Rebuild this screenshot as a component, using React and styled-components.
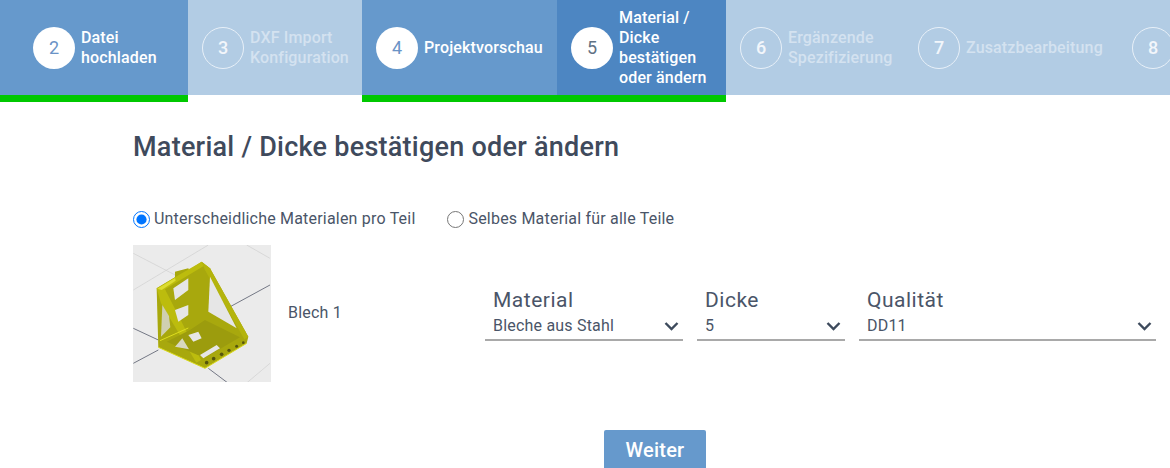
import React from 'react';
import styled, { createGlobalStyle } from 'styled-components';

const GlobalStyle = createGlobalStyle`
  html, body {
    margin: 0;
    height: 468px;
    overflow: hidden;
    background: #fff;
    font-family: Roboto, "Liberation Sans", sans-serif;
  }
`;

const Stepper = styled.nav`
  display: flex;
  align-items: flex-start;
  width: 1170px;
  height: 102px;
  overflow: hidden;
`;

const bgColors = { done: '#6699cc', current: '#4d86c2', todo: '#b2cce4' };

const Step = styled.div`
  flex: none;
  display: flex;
  align-items: center;
  gap: 6px;
  box-sizing: content-box;
  height: 95px;
  padding: 0 13px 0 14px;
  background: ${(p) => bgColors[p.$state]};
  border-bottom: ${(p) => (p.$state === 'todo' ? 'none' : '7px solid #00c800')};

  &:first-child {
    padding: 0 30px 0 33px;
  }
`;

const Circle = styled.span`
  flex: none;
  display: flex;
  align-items: center;
  justify-content: center;
  box-sizing: border-box;
  width: 42px;
  height: 42px;
  border-radius: 50%;
  font-size: 18px;
  background: ${(p) => (p.$state === 'todo' ? 'transparent' : '#fff')};
  border: ${(p) => (p.$state === 'todo' ? '1px solid #e8f0f8' : 'none')};
  color: ${(p) => (p.$state === 'todo' ? '#f2f6fb' : p.$state === 'current' ? '#5f7284' : '#6a93c6')};
  font-weight: ${(p) => (p.$state === 'todo' ? 500 : 400)};
`;

const StepLabel = styled.span`
  font-size: 16px;
  line-height: 20px;
  font-weight: 500;
  letter-spacing: 0.15px;
  white-space: nowrap;
  width: ${(p) => p.$width}px;
  color: ${(p) => (p.$state === 'todo' ? '#d4e2f0' : '#fff')};
`;

const Main = styled.main`
  padding: 28px 14px 0 133px;
`;

const Title = styled.h1`
  margin: 0;
  font-size: 27px;
  line-height: 34px;
  font-weight: 500;
  letter-spacing: 0.25px;
  color: #3f4a5c;
`;

const RadioRow = styled.div`
  display: flex;
  gap: 32px;
  margin-top: 44px;
`;

const RadioLabel = styled.label`
  display: flex;
  align-items: center;
  gap: 4px;
  font-size: 16px;
  line-height: 22px;
  letter-spacing: 0.2px;
  color: #4a5568;

  input {
    margin: 0;
    width: 17px;
    height: 17px;
  }
`;

const PartRow = styled.div`
  display: flex;
  align-items: center;
  margin-top: 15px;
`;

const Thumb = styled.svg`
  flex: none;
  display: block;
  width: 138px;
  height: 137px;
  background: #ebebeb;
`;

const PartName = styled.div`
  flex: none;
  width: 197px;
  padding: 0 0 2px 17px;
  box-sizing: border-box;
  font-size: 16px;
  letter-spacing: 0.2px;
  color: #4a5568;
`;

const Fields = styled.div`
  display: flex;
  gap: 14px;
  margin-left: 17px;
  margin-top: 2px;
`;

const Field = styled.div`
  width: ${(p) => p.$width}px;
`;

const FieldLabel = styled.div`
  padding-left: 8px;
  margin-bottom: 2px;
  font-size: 21px;
  line-height: 24px;
  letter-spacing: 0.5px;
  color: #4a5568;
`;

const SelectBox = styled.div`
  display: flex;
  align-items: center;
  justify-content: space-between;
  height: 27px;
  padding: 0 4px 2px 8px;
  box-sizing: border-box;
  border-bottom: 2px solid #a9a9a9;
  font-size: 16px;
  letter-spacing: 0.2px;
  color: #4a5568;
`;

const Actions = styled.div`
  display: flex;
  justify-content: center;
  padding-left: 21px;
  margin-top: 48px;
`;

const NextButton = styled.button`
  width: 102px;
  height: 40px;
  border: none;
  border-radius: 2px;
  background: #6699cc;
  color: #fff;
  font-family: inherit;
  font-size: 20px;
  font-weight: 500;
  letter-spacing: 0.2px;
`;

const Chevron = () => (
  <svg width="15" height="10" viewBox="0 0 15 10" fill="none">
    <path d="M1.5 2 L7.5 8 L13.5 2" stroke="#3d4a5c" strokeWidth="2.4" />
  </svg>
);

const steps = [
  { n: 2, label: ['Datei', 'hochladen'], state: 'done', width: 77 },
  { n: 3, label: ['DXF Import', 'Konfiguration'], state: 'todo', width: 99 },
  { n: 4, label: ['Projektvorschau'], state: 'done', width: 120 },
  { n: 5, label: ['Material /', 'Dicke', 'bestätigen', 'oder ändern'], state: 'current', width: 94 },
  { n: 6, label: ['Ergänzende', 'Spezifizierung'], state: 'todo', width: 103 },
  { n: 7, label: ['Zusatzbearbeitung'], state: 'todo', width: 139 },
  { n: 8, label: [], state: 'todo', width: 60 },
];

const fields = [
  { label: 'Material', value: 'Bleche aus Stahl', width: 198 },
  { label: 'Dicke', value: '5', width: 148 },
  { label: 'Qualität', value: 'DD11', width: 297 },
];

const PartThumb = () => (
  <Thumb viewBox="0 0 138 137">
    <defs>
      <filter id="soft">
        <feGaussianBlur stdDeviation="1.1" />
      </filter>
    </defs>
    <g transform="translate(-8 -5) scale(0.3333)" fill="none" filter="url(#soft)">
      <g stroke="#cfcfcf" strokeWidth="2">
        <path d="M25 40 L160 110" />
        <path d="M365 15 L435 55" />
        <path d="M25 150 L250 15" />
        <path d="M340 450 L435 370" />
      </g>
      <g stroke="#5b6070" strokeWidth="2.5">
        <path d="M25 265 L100 300" />
        <path d="M25 370 L100 330" />
        <path d="M270 225 L435 135" />
        <path d="M250 385 L310 430" />
      </g>
      {/* silhouette */}
      <path
        d="M95 145 L150 112 L150 95 L190 85 L192 90 L230 65 L255 85 L370 290 L365 310 L240 385 L100 322 Z"
        fill="#a8a808"
      />
      {/* lit left edge and top edge */}
      <path d="M95 145 L150 112 L230 65 L236 78 L120 148 L228 360 L214 368 L108 190 Z" fill="#bcbc10" />
      <path d="M97 146 L150 114 L152 122 L110 150 Z" fill="#dcdc30" />
      <path d="M230 65 L255 85 L370 290 L358 298 L240 90 Z" fill="#b4b40c" />
      {/* base, in shade */}
      <path d="M125 305 L195 270 L240 240 L345 292 L245 350 L218 345 Z" fill="#9c9c08" />
      {/* openings */}
      <g fill="#e6e6e6">
        <path d="M255 110 L335 265 L250 215 Z" />
        <path d="M145 145 L190 115 L190 150 L150 180 Z" />
        <path d="M150 210 L190 195 L190 225 L160 245 Z" />
        <path d="M190 285 L220 275 L230 295 L205 305 Z" />
        <path d="M225 345 L275 315 L285 325 L235 355 Z" />
      </g>
      <path d="M112 195 L132 228 L136 262 L108 290 Z" fill="#d0d0b0" />
      <path d="M172 295 L192 328 L150 320 Z" fill="#d8d8c0" />
      <path d="M105 302 L190 264" stroke="#dede20" strokeWidth="3" />
      <path d="M100 322 L240 385 L365 310" stroke="#d8d818" strokeWidth="3" />
      <g fill="#55550c">
        <circle cx="245" cy="368" r="5.5" />
        <circle cx="266" cy="356" r="5.5" />
        <circle cx="290" cy="343" r="5.5" />
        <circle cx="312" cy="331" r="5" />
        <circle cx="335" cy="319" r="4.5" />
        <circle cx="355" cy="308" r="4" />
      </g>
    </g>
  </Thumb>
);

export default function App() {
  return (
    <>
      <GlobalStyle />
      <Stepper>
        {steps.map((s) => (
          <Step key={s.n} $state={s.state}>
            <Circle $state={s.state}>{s.n}</Circle>
            <StepLabel $state={s.state} $width={s.width}>
              {s.label.map((line) => (
                <div key={line}>{line}</div>
              ))}
            </StepLabel>
          </Step>
        ))}
      </Stepper>
      <Main>
        <Title>Material / Dicke bestätigen oder ändern</Title>
        <RadioRow>
          <RadioLabel>
            <input type="radio" name="mode" defaultChecked />
            Unterscheidliche Materialen pro Teil
          </RadioLabel>
          <RadioLabel>
            <input type="radio" name="mode" />
            Selbes Material für alle Teile
          </RadioLabel>
        </RadioRow>
        <PartRow>
          <PartThumb />
          <PartName>Blech 1</PartName>
          <Fields>
            {fields.map((f) => (
              <Field key={f.label} $width={f.width}>
                <FieldLabel>{f.label}</FieldLabel>
                <SelectBox>
                  {f.value}
                  <Chevron />
                </SelectBox>
              </Field>
            ))}
          </Fields>
        </PartRow>
        <Actions>
          <NextButton>Weiter</NextButton>
        </Actions>
      </Main>
    </>
  );
}
